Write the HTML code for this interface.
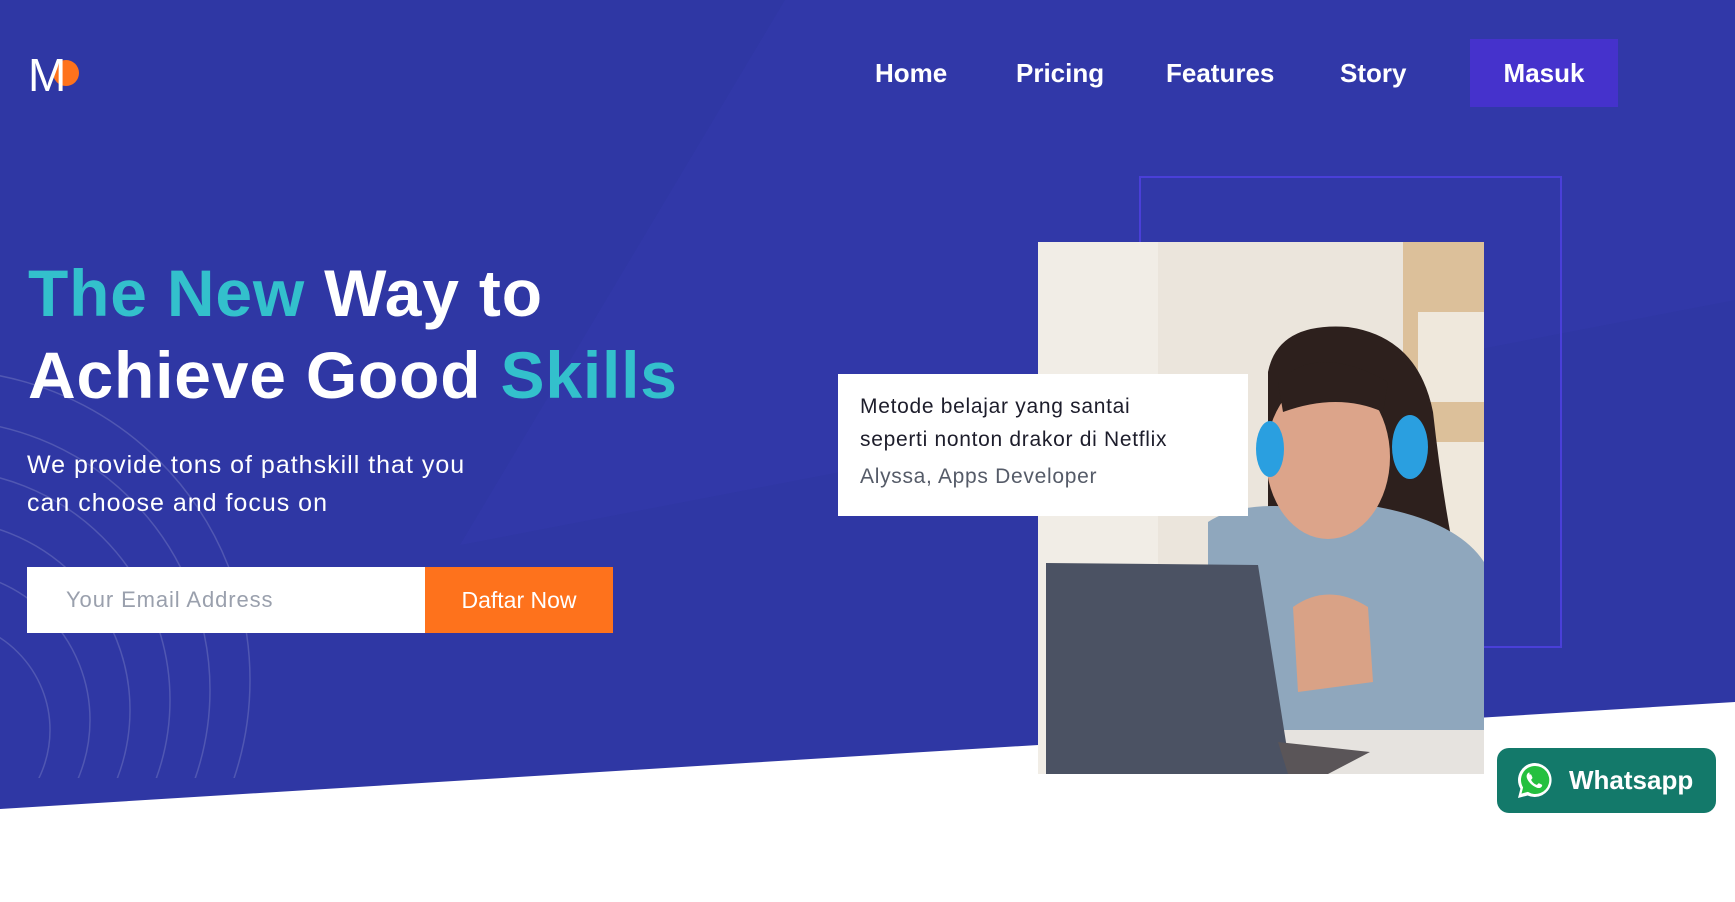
<!DOCTYPE html>
<html style="overflow:hidden"><head><meta charset="utf-8"><style>
*{margin:0;padding:0;box-sizing:border-box}
html,body{width:1735px;height:902px;overflow:hidden}
body{background:#fff;font-family:"Liberation Sans",sans-serif;position:relative}
.abs{position:absolute}
.nav{position:absolute;top:58px;color:#fff;font-size:26px;font-weight:bold;line-height:30px}
h1{position:absolute;left:28px;top:252px;font-size:66px;line-height:82px;color:#fff;font-weight:bold;letter-spacing:0.8px;white-space:nowrap}
.t{color:#33c0cc}
</style></head><body>
<svg class="abs" style="left:0;top:0" width="1735" height="902">
<polygon points="0,0 1735,0 1735,702 0,809" fill="#2f37a4"/>
<polygon points="785,0 1735,0 1735,300 460,545" fill="#3339ab" opacity="0.6"/>
<clipPath id="c"><rect x="0" y="370" width="300" height="408"/></clipPath>
<g clip-path="url(#c)" fill="none" stroke="rgba(255,255,255,0.16)" stroke-width="1.5">
<circle cx="-60" cy="680" r="310"/><circle cx="-60" cy="690" r="270"/><circle cx="-60" cy="700" r="230"/><circle cx="-60" cy="710" r="190"/><circle cx="-60" cy="720" r="150"/><circle cx="-60" cy="730" r="110"/>
</g>
<rect x="1140" y="177" width="421" height="470" fill="none" stroke="#4a3fd8" stroke-width="2"/>
<circle cx="66" cy="73" r="13" fill="#fe721c"/>
<text x="28" y="91" font-family="Liberation Sans" font-size="46" fill="#fff">M</text>
</svg>
<div class="nav" style="left:875px">Home</div>
<div class="nav" style="left:1016px">Pricing</div>
<div class="nav" style="left:1166px">Features</div>
<div class="nav" style="left:1340px">Story</div>
<div class="abs" style="left:1470px;top:39px;width:148px;height:68px;background:#4532cc;color:#fff;font-size:26px;font-weight:bold;text-align:center;line-height:68px">Masuk</div>
<h1><span class="t">The New</span> Way to<br>Achieve Good <span class="t">Skills</span></h1>
<div class="abs" style="left:27px;top:446px;color:#fff;font-size:25px;line-height:38px;letter-spacing:1px;white-space:nowrap">We provide tons of pathskill that you<br>can choose and focus on</div>
<div class="abs" style="left:27px;top:567px;width:398px;height:66px;background:#fff;color:#9aa0ad;font-size:22px;line-height:66px;padding-left:39px;letter-spacing:0.9px">Your Email Address</div>
<div class="abs" style="left:425px;top:567px;width:188px;height:66px;background:#fe721c;color:#fff;font-size:23px;line-height:66px;text-align:center">Daftar Now</div>
<svg class="abs" style="left:1038px;top:242px" width="446" height="532" viewBox="0 0 446 532">
<rect width="446" height="532" fill="#ebe5dc"/>
<rect x="0" y="0" width="120" height="532" fill="#f1ede6"/>
<rect x="365" y="0" width="81" height="532" fill="#dcc09a"/>
<rect x="380" y="70" width="66" height="90" fill="#efe8dc"/>
<rect x="380" y="200" width="66" height="120" fill="#efe8dc"/>
<path d="M230 130 Q240 80 310 85 Q380 95 395 170 Q405 260 420 330 L300 360 L230 300 Z" fill="#2d201d"/>
<path d="M170 280 Q200 260 260 265 L340 265 Q420 280 446 320 L446 490 L170 490 Z" fill="#8fa7bd"/>
<ellipse cx="290" cy="215" rx="62" ry="82" fill="#dca48a"/>
<path d="M240 140 Q280 100 350 140 L345 170 Q300 150 245 170 Z" fill="#2d201d"/>
<ellipse cx="232" cy="207" rx="14" ry="28" fill="#2a9fe0"/>
<ellipse cx="372" cy="205" rx="18" ry="32" fill="#2a9fe0"/>
<path d="M255 365 Q290 340 330 365 L335 440 L260 450 Z" fill="#d9a286"/>
<rect x="200" y="488" width="246" height="44" fill="#e6e3df"/>
<polygon points="8,321 220,323 253,532 8,532" fill="#4b5263"/>
<polygon points="240,500 332,510 290,532 250,532" fill="#5a5558"/>
</svg>
<div class="abs" style="left:838px;top:374px;width:410px;height:142px;background:#fff;padding:16px 0 0 22px;letter-spacing:0.7px;white-space:nowrap">
<div style="font-size:21px;line-height:33px;color:#1d1d2b">Metode belajar yang santai<br>seperti nonton drakor di Netflix</div>
<div style="font-size:21px;line-height:26px;color:#555b68;margin-top:8px">Alyssa, Apps Developer</div>
</div>
<div class="abs" style="left:1497px;top:748px;width:219px;height:65px;background:#13796a;border-radius:12px">
<svg class="abs" style="left:17px;top:12px" width="42" height="42" viewBox="0 0 42 42">
<path d="M21 3a17 17 0 0 0-14.6 25.7L4 38l9.6-2.5A17 17 0 1 0 21 3z" fill="#fff"/>
<path d="M21 6a14 14 0 0 0-11.9 21.4L7.5 33.6l6.4-1.7A14 14 0 1 0 21 6z" fill="#25c03f"/>
<path d="M15.5 12.5c-.6 0-1.4.3-1.9 1-.6.8-1.5 2.3-.6 4.8 1.3 3.5 5 7.6 9.6 9.3 2.6.9 4 .2 4.8-.6.6-.6.9-1.6.7-2.1-.2-.4-2.9-1.7-3.4-1.7-.5 0-1.2 1.4-1.700 1.6-.9.3-4.8-2.2-5.8-4.8-.2-.6 1.3-1.4 1.3-2.1 0-.4-1.2-3.2-1.5-3.400-.3-.3-1-.1-1.5 0z" fill="#fff"/>
</svg>
<div class="abs" style="left:72px;top:0;line-height:65px;color:#fff;font-size:26px;font-weight:bold">Whatsapp</div>
</div>
</body></html>
